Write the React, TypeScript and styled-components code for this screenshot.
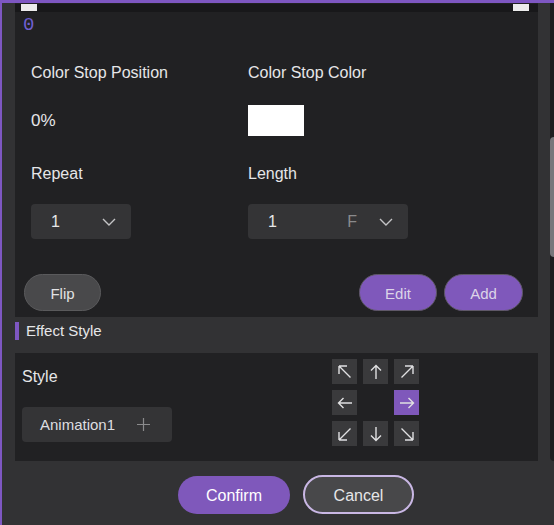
import styled, { createGlobalStyle } from "styled-components";

const GlobalStyle = createGlobalStyle`
  html, body {
    margin: 0;
    padding: 0;
    background: #323234;
    overflow: hidden;
  }
  body {
    font-family: "Liberation Sans", Arial, sans-serif;
    color: #e6e6e8;
  }
`;

const Dialog = styled.div`
  width: 554px;
  height: 525px;
  box-sizing: border-box;
  border-top: 3px solid #7e57c2;
  border-left: 2px solid #7e57c2;
  background: #323234;
  display: flex;
  flex-direction: column;
  overflow: hidden;
`;

const ScrollArea = styled.div`
  display: flex;
  height: 458px;
  flex-shrink: 0;
`;

const Content = styled.div`
  flex: 0 0 548px;
  box-sizing: border-box;
  padding: 0 12px 0 13px;
  display: flex;
  flex-direction: column;
`;

const Track = styled.div`
  flex: 0 0 8px;
  background: #1e1e20;
  border-radius: 0 0 4px 4px;
`;

const Thumb = styled.div`
  margin-top: 134px;
  height: 120px;
  background: #77777b;
  border-radius: 4px;
`;

const Panel = styled.section`
  background: #212123;
`;

const TopPanel = styled(Panel)`
  padding: 1px 0 6px;
`;

const GradientBar = styled.div`
  position: relative;
  height: 8px;
  background: #18181a;
`;

const Handle = styled.span<{ $side: "left" | "right" }>`
  position: absolute;
  top: 0;
  width: 16px;
  height: 7px;
  background: #ececec;
  ${(p) => (p.$side === "left" ? "left: 6px;" : "right: 9px;")}
`;

const StopIndex = styled.div`
  font-family: "Liberation Mono", "Courier New", monospace;
  font-size: 19px;
  line-height: 20px;
  color: #6f5fd0;
  padding: 3px 0 0 8px;
`;

const Fields = styled.div`
  margin-top: 29px;
  padding-left: 16px;
  display: flex;
  flex-direction: column;
  gap: 29px;
`;

const FieldRow = styled.div`
  display: grid;
  grid-template-columns: 217px 1fr;
`;

const Field = styled.div<{ $gap: number }>`
  display: flex;
  flex-direction: column;
  align-items: flex-start;
  gap: ${(p) => p.$gap}px;
`;

const Label = styled.div`
  font-size: 16px;
  line-height: 18px;
  color: #e6e6e8;
`;

const ValueText = styled.div`
  height: 31px;
  display: flex;
  align-items: center;
  font-size: 17px;
`;

const Swatch = styled.div<{ $color: string }>`
  width: 56px;
  height: 31px;
  background: ${(p) => p.$color};
`;

const Select = styled.div<{ $width: number }>`
  width: ${(p) => p.$width}px;
  height: 35px;
  box-sizing: border-box;
  padding: 0 15px 0 20px;
  background: #343436;
  border-radius: 4px;
  display: flex;
  align-items: center;
  font-size: 16px;
`;

const SelectValue = styled.span`
  flex: 1;
`;

const Unit = styled.span`
  color: #8a8a8c;
  margin-right: 22px;
`;

const ButtonRow = styled.div`
  margin-top: 35px;
  padding: 0 15px 0 9px;
  display: flex;
  justify-content: space-between;
`;

const ButtonGroup = styled.div`
  display: flex;
  gap: 7px;
`;

const PillButton = styled.button<{ $primary?: boolean; $width: number }>`
  width: ${(p) => p.$width}px;
  height: 37px;
  border-radius: 19px;
  border: 1px solid ${(p) => (p.$primary ? "#5f5868" : "#5a5a5c")};
  background: ${(p) => (p.$primary ? "#7f58bb" : "#49494b")};
  color: ${(p) => (p.$primary ? "#dcd4e8" : "#e2e2e4")};
  font-family: "Liberation Sans", Arial, sans-serif;
  font-size: 15px;
  padding: 2px 0 0;
`;

const SectionHeader = styled.div`
  padding: 5px 0 13px;
  display: flex;
  align-items: center;
`;

const HeaderBar = styled.span`
  width: 4px;
  height: 18px;
  background: #7e57c2;
`;

const HeaderTitle = styled.span`
  margin-left: 7px;
  font-size: 15px;
  line-height: 18px;
  color: #e6e6e8;
`;

const EffectPanel = styled(Panel)`
  padding: 6px 0 15px 7px;
  display: flex;
`;

const StyleColumn = styled.div`
  width: 310px;
  padding-top: 9px;
  display: flex;
  flex-direction: column;
  align-items: flex-start;
  gap: 21px;
`;

const AnimationChip = styled.div`
  width: 150px;
  height: 35px;
  box-sizing: border-box;
  padding: 0 22px 0 18px;
  background: #343436;
  border-radius: 4px;
  display: flex;
  align-items: center;
  justify-content: space-between;
  font-size: 15px;
  color: #dedee0;
`;

const DirGrid = styled.div`
  display: grid;
  grid-template-columns: repeat(3, 25px);
  grid-auto-rows: 25px;
  gap: 6px;
`;

const DirCell = styled.div<{ $active?: boolean; $empty?: boolean }>`
  display: flex;
  align-items: center;
  justify-content: center;
  background: ${(p) =>
    p.$empty ? "transparent" : p.$active ? "#7f58bb" : "#3a3a3c"};
`;

const ArrowSvg = styled.svg<{ $rotate: number }>`
  transform: rotate(${(p) => p.$rotate}deg);
`;

const Footer = styled.div`
  flex: 1;
  display: flex;
  justify-content: center;
  align-items: flex-start;
  padding: 14px 0 0 36px;
  gap: 13px;
`;

const ConfirmButton = styled.button`
  width: 112px;
  height: 38px;
  margin-top: 1px;
  padding: 2px 0 0;
  border-radius: 19px;
  border: none;
  background: #7f58bb;
  color: #ffffff;
  font-family: "Liberation Sans", Arial, sans-serif;
  font-size: 16px;
`;

const CancelButton = styled.button`
  width: 111px;
  height: 39px;
  padding: 2px 0 0;
  border-radius: 20px;
  border: 2px solid #c9b7e4;
  background: #48484a;
  color: #e6e6e8;
  font-family: "Liberation Sans", Arial, sans-serif;
  font-size: 16px;
`;

const Chevron = () => (
  <svg width="14" height="8" viewBox="0 0 14 8">
    <polyline
      points="1,1 7,7 13,1"
      fill="none"
      stroke="#c4c4c6"
      strokeWidth="1.4"
    />
  </svg>
);

const Plus = () => (
  <svg width="13" height="13" viewBox="0 0 13 13">
    <path d="M6.5 0v13M0 6.5h13" stroke="#8a8a8c" strokeWidth="1.2" />
  </svg>
);

type Dir = { rotate: number; diagonal: boolean } | null;

const directions: Dir[] = [
  { rotate: 0, diagonal: true },
  { rotate: 0, diagonal: false },
  { rotate: 90, diagonal: true },
  { rotate: -90, diagonal: false },
  null,
  { rotate: 90, diagonal: false },
  { rotate: -90, diagonal: true },
  { rotate: 180, diagonal: false },
  { rotate: 180, diagonal: true },
];

const Arrow = ({ rotate, diagonal }: { rotate: number; diagonal: boolean }) => (
  <ArrowSvg $rotate={rotate} width="16" height="16" viewBox="0 0 16 16">
    <path
      d={diagonal ? "M2 2h8M2 2v8M2 2l11.5 11.5" : "M8 1.5V15M3 6.5l5-5 5 5"}
      fill="none"
      stroke="#e0e0e2"
      strokeWidth="1.4"
    />
  </ArrowSvg>
);

export default function App() {
  return (
    <>
      <GlobalStyle />
      <Dialog>
        <ScrollArea>
          <Content>
            <TopPanel>
              <GradientBar>
                <Handle $side="left" />
                <Handle $side="right" />
              </GradientBar>
              <StopIndex>0</StopIndex>
              <Fields>
                <FieldRow>
                  <Field $gap={23}>
                    <Label>Color Stop Position</Label>
                    <ValueText>0%</ValueText>
                  </Field>
                  <Field $gap={23}>
                    <Label>Color Stop Color</Label>
                    <Swatch $color="#ffffff" />
                  </Field>
                </FieldRow>
                <FieldRow>
                  <Field $gap={21}>
                    <Label>Repeat</Label>
                    <Select $width={100}>
                      <SelectValue>1</SelectValue>
                      <Chevron />
                    </Select>
                  </Field>
                  <Field $gap={21}>
                    <Label>Length</Label>
                    <Select $width={160}>
                      <SelectValue>1</SelectValue>
                      <Unit>F</Unit>
                      <Chevron />
                    </Select>
                  </Field>
                </FieldRow>
              </Fields>
              <ButtonRow>
                <PillButton $width={77}>Flip</PillButton>
                <ButtonGroup>
                  <PillButton $primary $width={78}>
                    Edit
                  </PillButton>
                  <PillButton $primary $width={79}>
                    Add
                  </PillButton>
                </ButtonGroup>
              </ButtonRow>
            </TopPanel>
            <SectionHeader>
              <HeaderBar />
              <HeaderTitle>Effect Style</HeaderTitle>
            </SectionHeader>
            <EffectPanel>
              <StyleColumn>
                <Label>Style</Label>
                <AnimationChip>
                  <span>Animation1</span>
                  <Plus />
                </AnimationChip>
              </StyleColumn>
              <DirGrid>
                {directions.map((d, i) =>
                  d ? (
                    <DirCell key={i} $active={i === 5}>
                      <Arrow rotate={d.rotate} diagonal={d.diagonal} />
                    </DirCell>
                  ) : (
                    <DirCell key={i} $empty />
                  )
                )}
              </DirGrid>
            </EffectPanel>
          </Content>
          <Track>
            <Thumb />
          </Track>
        </ScrollArea>
        <Footer>
          <ConfirmButton>Confirm</ConfirmButton>
          <CancelButton>Cancel</CancelButton>
        </Footer>
      </Dialog>
    </>
  );
}
